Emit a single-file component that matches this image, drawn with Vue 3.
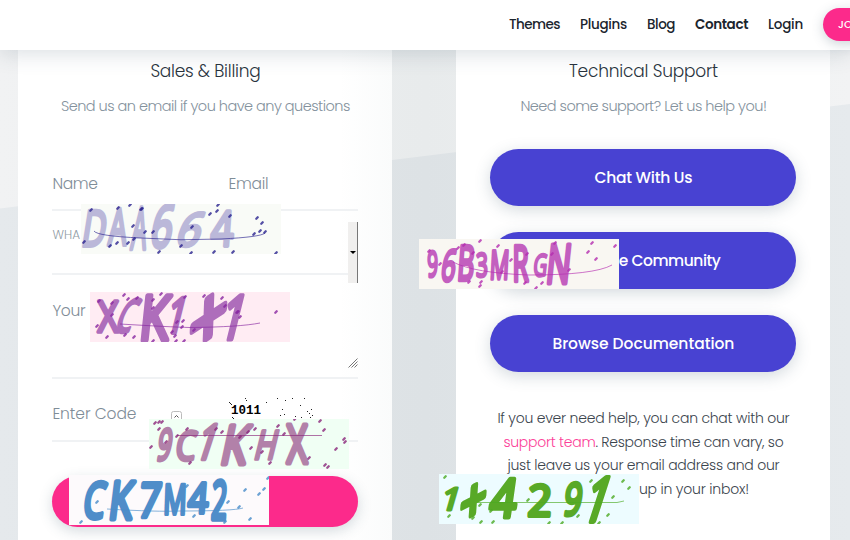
<script setup>
// Sets tracking so that a label fills its given width.
const vFit = {
  mounted(el, { value }) {
    const natural = el.getBoundingClientRect().width
    const gap = (value - natural) / el.textContent.trim().length
    el.style.letterSpacing = gap.toFixed(3) + 'px'
  },
}

const nav = [
  { label: 'Themes', w: 51 },
  { label: 'Plugins', w: 47 },
  { label: 'Blog', w: 28 },
  { label: 'Contact', w: 53, active: true },
  { label: 'Login', w: 35 },
]
const links = [
  { label: 'Chat With Us', w: 98 },
  { label: 'Join The Community', w: 154 },
  { label: 'Browse Documentation', w: 182 },
]

// glyph: [character, left, right, top, bottom, slant, tilt]
const stamps = [
  {
    id: 'a', bg: '#f9fbf7', ink: '#bbb8d9', dot: '#2b2490', bold: 0.8,
    glyphs: [['D', 5, 23, 7, 42, -9], ['A', 28, 46, 5, 41, -4], ['A', 51, 66, 4, 45, -5], ['6', 73, 91, 1, 43, -10], ['6', 100, 120, 9, 42, -18], ['4', 132, 151, 7, 42, -4]],
    dots: [[10, 6], [3, 38], [29, 42], [36, 39], [47, 39], [37, 4], [49, 1], [60, 5], [61, 5], [52, 22], [64, 28], [72, 28], [53, 35], [78, 48], [100, 42], [110, 49], [111, 23], [129, 10], [137, 1], [136, 7], [149, 12], [133, 48], [152, 48], [176, 14], [181, 19], [179, 27], [184, 28], [173, 30], [195, 49]],
    line: 'M13 27Q16 32 60 34Q100 37 140 35Q180 33 184 29',
  },
  {
    id: 'b', bg: '#ffecf3', ink: '#ae6dbb', dot: '#8927a2', bold: 0.85,
    glyphs: [['X', 8, 28, 9, 40, 0], ['C', 31, 45, 7, 40, -22], ['K', 53, 77, 4, 48, -6], ['1', 83, 92, 6, 41, -14], ['+', 103, 134, 6, 45, -2, -34], ['1', 139, 150, 4, 47, -14]],
    dots: [[9, 9], [22, 11], [34, 3], [38, 7], [47, 6], [63, 8], [71, 2], [22, 23], [7, 34], [17, 45], [35, 43], [44, 45], [63, 16], [63, 49], [82, 40], [86, 49], [94, 49], [87, 30], [93, 29], [92, 35], [85, 44], [95, 5], [104, 38], [114, 4], [132, 6], [135, 14], [147, 20], [148, 20], [150, 25], [186, 20]],
    line: 'M30 32Q80 35 100 35.500Q150 35 170 31',
  },
  {
    id: 'c', bg: '#f9f7f2', ink: '#c35fbf', dot: '#b52db0', bold: 0.9,
    glyphs: [['9', 9, 18, 12, 38, 0], ['6', 24, 36, 11, 42, -8], ['B', 41, 53, 7, 41, -4], ['3', 58, 68, 14, 38, 0], ['M', 73, 88, 12, 40, -3], ['R', 95, 108, 7, 42, 0], ['G', 116, 127, 15, 37, -6], ['N', 131, 149, 6, 44, -6]],
    dots: [[10, 12], [21, 25], [61, 2], [79, 7], [39, 9], [45, 6], [54, 14], [50, 43], [62, 43], [61, 47], [83, 33], [92, 21], [108, 15], [106, 44], [117, 49], [123, 44], [136, 4], [133, 15], [150, 31], [169, 13], [173, 4], [177, 20], [196, 7]],
    line: 'M34 23Q55 34 110 36Q175 36 193 26',
  },
  {
    id: 'd', bg: '#f0fff4', ink: '#b281a9', dot: '#8b267b', bold: 0.95,
    glyphs: [['9', 10, 22, 10, 41, -9], ['C', 29, 46, 12, 41, -8], ['1', 55, 64, 6, 40, -18], ['K', 76, 97, 7, 45, -12], ['H', 110, 126, 12, 40, -14], ['X', 138, 158, 6, 44, 0]],
    dots: [[6, 4], [10, 3], [13, 3], [10, 10], [2, 28], [17, 23], [28, 17], [38, 10], [41, 44], [67, 10], [73, 13], [91, 18], [99, 13], [106, 10], [102, 29], [113, 33], [121, 44], [129, 7], [135, 15], [146, 0], [171, 2], [175, 11], [160, 39], [176, 46], [179, 48], [187, 30], [195, 20], [196, 23]],
    line: 'M28 16.500H173',
  },
  {
    id: 'e', bg: '#fdfafc', ink: '#4f8dc9', dot: '#478cca', bold: 1,
    glyphs: [['C', 17, 35, 7, 43, -8], ['K', 43, 62, 7, 44, -7], ['7', 72, 90, 8, 42, -7], ['M', 97, 115, 10, 39, -2], ['4', 121, 138, 8, 38, -4], ['2', 144, 157, 6, 44, -3]],
    dots: [[12, 47], [28, 27], [63, 7], [77, 42], [118, 11], [125, 41], [156, 47], [159, 27], [170, 32], [176, 15], [190, 19], [195, 14], [181, 44], [199, 3]],
    line: 'M38 34Q90 37 110 36Q165 36 174 33',
  },
  {
    id: 'f', bg: '#edfcff', ink: '#58a927', dot: '#4caa22', bold: 0.95,
    glyphs: [['1', 8, 17, 14, 36, -16], ['+', 24, 45, 12, 40, -4, -28], ['4', 54, 76, 5, 43, -8], ['2', 91, 111, 11, 42, -3], ['9', 127, 142, 9, 41, -8], ['1', 154, 165, 4, 47, -18]],
    dots: [[6, 3], [10, 42], [34, 44], [42, 48], [41, 31], [52, 37], [54, 48], [89, 26], [110, 49], [123, 49], [139, 42], [152, 7], [160, 49], [169, 41], [174, 23], [184, 7], [190, 14]],
    line: 'M38 28.500H178L185 27',
  },
]

// Ink boxes at font-size 10: [width, height, height of the foot above the baseline]
const INK = { '1': [2.6, 7.1, 0], '+': [4.7, 4.7, 1.2], M: [7, 7.1, 0], G: [5.8, 7.3, 0], C: [5.3, 7.3, 0], X: [5.6, 7.1, 0], A: [6.3, 7.1, 0], N: [5.6, 7.1, 0], B: [4.6, 7.1, 0], R: [5, 7.1, 0], K: [5, 7.1, 0] }
function place([ch, l, r, t, b, slant, tilt = 0]) {
  const [w, h, foot] = INK[ch] || (/\d/.test(ch) ? [4.8, 7.2, 0] : [5.5, 7.1, 0])
  return `translate(${(l + r) / 2} ${(t + b) / 2}) skewX(${slant}) skewY(${tilt}) scale(${(r - l) / w} ${(b - t) / h}) translate(0 ${h / 2 + foot})`
}

const specks = [[0, 4], [1, 5], [2, 6], [16, 0], [17, 2], [37, 4], [48, 0], [53, 11], [55, 16], [63, 0], [71, 7], [75, 0], [78, 13], [80, 15], [82, 11], [83, 17], [51, 17], [66, 18], [81, 19], [4, 20], [3, 19], [72, 19], [56, 2]]
</script>

<template>
  <div class="page">
    <svg class="backdrop" viewBox="0 0 850 540" preserveAspectRatio="none">
      <defs>
        <linearGradient id="top" x1="0" x2="1"><stop offset="0" stop-color="#f1f2f3" /><stop offset=".5" stop-color="#e8ebec" /><stop offset="1" stop-color="#f2f3f4" /></linearGradient>
        <linearGradient id="low" x1="0" x2="1"><stop offset="0" stop-color="#e5e9ec" /><stop offset=".5" stop-color="#dde2e5" /><stop offset="1" stop-color="#e6eaed" /></linearGradient>
      </defs>
      <rect width="850" height="540" fill="url(#top)" />
      <path d="M0 208.500L392 160L850 104V540H0Z" fill="url(#low)" />
    </svg>

    <header class="bar">
      <nav>
        <a v-for="n in nav" :key="n.label" :class="{ active: n.active }" :style="{ width: n.w + 'px' }"><span v-fit="n.w">{{ n.label }}</span></a>
      </nav>
      <a class="join">JOIN</a>
    </header>

    <main>
      <section class="card sales">
        <h2><span v-fit="110">Sales &amp; Billing</span></h2>
        <p class="sub"><span v-fit="289">Send us an email if you have any questions</span></p>
        <div class="form">
          <div class="row names">
            <label><span v-fit="45">Name</span></label>
            <label><span v-fit="40">Email</span></label>
          </div>
          <div class="row topic">
            <label><span v-fit="28">WHA</span></label>
            <div class="picker"><i></i></div>
          </div>
          <div class="row message">
            <label><span v-fit="33">Your</span></label>
            <svg class="grip" width="10" height="10" viewBox="0 0 10 10"><path d="M.5 9.500L9.500 .5M3.500 9.500L9.500 3.500M6.500 9.500L9.500 6.500" stroke="#777" /></svg>
          </div>
          <div class="row code">
            <label><span v-fit="84">Enter Code</span></label>
            <svg class="caret" width="11" height="11" viewBox="0 0 11 11" fill="none"><rect x=".5" y=".5" width="10" height="10" rx="2" stroke="#bbb" /><path d="M3.500 6.500L5.500 4.500L7.500 6.500" stroke="#555" /></svg>
            <svg class="digits" width="90" height="22" viewBox="0 0 90 22">
              <rect v-for="(s, i) in specks" :key="i" :x="s[0]" :y="s[1]" width="1" height="1" fill="#222" />
              <text x="2" y="15.500" textLength="30">1011</text>
            </svg>
          </div>
        </div>
        <button class="send"></button>
      </section>

      <section class="card">
        <h2><span v-fit="149">Technical Support</span></h2>
        <p class="sub"><span v-fit="246">Need some support? Let us help you!</span></p>
        <div class="links">
          <button v-for="l in links" :key="l.label"><span v-fit="l.w">{{ l.label }}</span></button>
        </div>
        <div class="note">
          <p><span v-fit="292">If you ever need help, you can chat with our</span></p>
          <p><span v-fit="280"><a>support team</a>. Response time can vary, so</span></p>
          <p><span v-fit="272">just leave us your email address and our</span></p>
          <p class="last"><span v-fit="110">up in your inbox!</span></p>
        </div>
      </section>
    </main>

    <svg v-for="s in stamps" :key="s.id" class="stamp" :class="'stamp-' + s.id" viewBox="0 0 200 50">
      <rect width="200" height="50" :fill="s.bg" />
      <g class="ink" :fill="s.ink" :stroke="s.ink" :stroke-width="s.bold">
        <text v-for="(g, i) in s.glyphs" :key="i" :transform="place(g)">{{ g[0] }}</text>
      </g>
      <path :d="s.line" fill="none" :stroke="s.dot" stroke-width="1" opacity=".65" />
      <path v-for="(d, i) in s.dots" :key="'d' + i" :d="`M${d[0] - 0.7} ${d[1] + 0.7}l1.400 -1.400`" :stroke="s.dot" stroke-width="2.300" stroke-linecap="round" opacity=".8" />
    </svg>
  </div>
</template>

<style>
body { overflow: hidden; }
</style>
<style scoped>
.page { position: relative; width: 850px; height: 540px; overflow: hidden; font-family: Poppins, Inter, "Open Sans", sans-serif; font-weight: 300; color: #3a444d; }
.backdrop { position: absolute; inset: 0; width: 850px; height: 540px; }
span { display: inline-block; white-space: nowrap; }
h2, p { margin: 0; }
.bar { position: relative; z-index: 2; height: 50px; background: #fff; box-shadow: 0 3px 22px rgba(60, 85, 105, .2); display: flex; align-items: flex-start; padding-left: 509px; box-sizing: border-box; }
nav { display: flex; gap: 20px; padding-top: 14px; flex: none; }
nav a { font-size: 13.500px; line-height: 21px; font-weight: 500; color: #1b252e; }
nav a.active { font-weight: 600; }
.join { flex: none; margin: 8px 0 0 20px; width: 110px; height: 33px; border-radius: 17px; background: #fc2a8b; color: #fff; font-size: 10.500px; line-height: 34px; font-weight: 500; padding-left: 15px; box-sizing: border-box; box-shadow: 0 3px 12px rgba(60, 85, 105, .25); }
main { position: relative; display: flex; gap: 64px; padding-left: 18.400px; height: 490px; }
.card { flex: none; width: 374px; height: 490px; background: #fff; padding: 0 34px; box-sizing: border-box; display: flex; flex-direction: column; }
.sales { background: linear-gradient(90deg, #fff 86%, #fafbfb); }
h2 { margin-top: 9px; text-align: center; font-size: 17px; line-height: 25px; font-weight: 300; color: #29333d; }
.sub { margin-top: 12px; text-align: center; font-size: 14.500px; line-height: 20px; color: #84929d; }
.form { margin-top: 54px; height: 272px; }
.row { display: flex; box-sizing: border-box; border-bottom: 2px solid #f0f2f4; color: #7f8d98; font-size: 15.500px; line-height: 20px; }
.names { height: 41px; padding-top: 4px; }
.names label { width: 176px; }
.names label + label { width: auto; }
.topic { height: 64px; font-size: 12px; padding-top: 14px; }
.topic label { flex: 1; color: #909ca5; }
.picker { width: 10px; height: 61px; margin-top: -3px; flex: none; background: #f0efee; border-right: 1px solid #777; box-sizing: border-box; display: flex; align-items: center; justify-content: center; }
.picker i { border: 3px solid transparent; border-top-color: #000; border-bottom: 0; }
.message { height: 104px; padding-top: 26px; justify-content: space-between; }
.grip { margin-top: 57px; }
.code { height: 63px; padding-top: 25px; }
.code label { width: 119px; }
.caret { margin-top: 7px; }
.digits { margin: -6px 0 0 46.500px; overflow: visible; }
.digits text { font: 700 12.500px "Liberation Mono", monospace; fill: #000; }
.send { flex: none; height: 51px; margin-top: 34px; border: 0; border-radius: 26px; background: #fc2a8b; box-shadow: 0 4px 14px rgba(60, 85, 105, .22); }
.links { margin-top: 32.500px; display: flex; flex-direction: column; gap: 26px; }
.links button { height: 57px; border: 0; border-radius: 29px; background: #4842d2; color: #fff; font: inherit; font-size: 15.500px; font-weight: 500; padding: 0; box-shadow: 0 4px 16px rgba(60, 85, 105, .22); }
.note { margin-top: 35.500px; text-align: center; font-size: 14px; line-height: 23.700px; font-weight: 350; }
.note p { height: 23.700px; margin: 0 -20px; }
.note .last { text-align: right; padding-right: 67.500px; }
.note a { color: #fc3f98; }
.stamp { position: absolute; z-index: 3; width: 200px; height: 50px; }
.ink { font: 10px "Open Sans", sans-serif; text-anchor: middle; stroke-linejoin: round; }
.stamp-a { left: 81px; top: 204px; }
.stamp-b { left: 90px; top: 292px; }
.stamp-c { left: 419px; top: 239px; }
.stamp-d { left: 149px; top: 419px; }
.stamp-e { left: 69px; top: 475px; }
.stamp-f { left: 439px; top: 474px; }
</style>
